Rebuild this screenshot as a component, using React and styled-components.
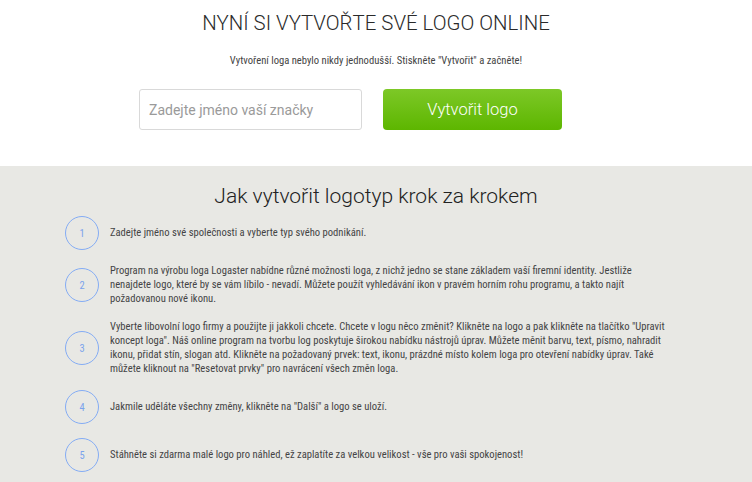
import React from 'react';
import styled, { createGlobalStyle } from 'styled-components';

const GlobalStyle = createGlobalStyle`
  html, body {
    margin: 0;
    padding: 0;
    background: #e8e8e4;
  }
  body {
    font-family: "Roboto", "Liberation Sans", sans-serif;
    color: #333;
  }
`;

const Page = styled.div`
  width: 752px;
  min-height: 482px;
  overflow: hidden;
`;

const Hero = styled.section`
  background: #ffffff;
  height: 166px;
  display: flex;
  flex-direction: column;
  align-items: center;
  box-sizing: border-box;
  padding-top: 9px;
`;

const Title = styled.h1`
  margin: 0;
  font-family: "Roboto", sans-serif;
  font-weight: 300;
  font-size: 20.4px;
  line-height: 28px;
  color: #2a2a2a;
`;

const Subtitle = styled.p`
  margin: 17px 0 0;
  font-family: "Roboto Condensed", "Liberation Sans Narrow", "Roboto", sans-serif;
  font-stretch: condensed;
  font-size: 10.6px;
  line-height: 14px;
  color: #444;
`;

const FormRow = styled.div`
  display: flex;
  gap: 21px;
  margin-top: 21px;
  margin-right: 51px;
`;

const NameInput = styled.input`
  width: 223px;
  height: 41px;
  box-sizing: border-box;
  border: 1px solid #d9d9d9;
  border-radius: 3px;
  padding: 0 9px;
  font-family: "Roboto", sans-serif;
  font-size: 14px;
  color: #333;
  outline: none;
  &::placeholder {
    color: #9a9a9a;
  }
`;

const CreateButton = styled.button`
  width: 179px;
  height: 41px;
  border: none;
  border-radius: 4px;
  background: linear-gradient(to bottom, #7dc827 0%, #5db600 100%);
  color: #ffffff;
  font-family: "Roboto", sans-serif;
  font-weight: 300;
  font-size: 16.5px;
  cursor: pointer;
`;

const Steps = styled.section`
  padding: 15px 0 0;
`;

const StepsTitle = styled.h2`
  margin: 0 0 5px;
  text-align: center;
  font-weight: 300;
  font-size: 21px;
  line-height: 30px;
  color: #222;
`;

const StepList = styled.ol`
  list-style: none;
  margin: 0;
  padding: 0 0 0 65px;
  display: flex;
  flex-direction: column;
  gap: 14px;
`;

const Step = styled.li`
  display: flex;
  align-items: center;
  gap: 11px;
  min-height: 34px;
`;

const Circle = styled.span`
  flex: 0 0 auto;
  width: 34px;
  height: 34px;
  box-sizing: border-box;
  border: 1.5px solid #84acf4;
  border-radius: 50%;
  display: flex;
  align-items: center;
  justify-content: center;
  font-family: "Roboto Condensed", "Roboto", sans-serif;
  font-stretch: condensed;
  font-size: 10.5px;
  font-weight: 400;
  color: #7aa3ec;
`;

const StepText = styled.p`
  margin: 0;
  font-family: "Roboto Condensed", "Liberation Sans Narrow", "Roboto", sans-serif;
  font-stretch: condensed;
  font-size: 10.6px;
  line-height: 14px;
  color: #444;
  white-space: nowrap;
`;

const steps = [
  ['Zadejte jméno své společnosti a vyberte typ svého podnikání.'],
  [
    'Program na výrobu loga Logaster nabídne různé možnosti loga, z nichž jedno se stane základem vaší firemní identity. Jestliže',
    'nenajdete logo, které by se vám líbilo - nevadí. Můžete použít vyhledávání ikon v pravém horním rohu programu, a takto najít',
    'požadovanou nové ikonu.',
  ],
  [
    'Vyberte libovolní logo firmy a použijte ji jakkoli chcete. Chcete v logu něco změnit? Klikněte na logo a pak klikněte na tlačítko "Upravit',
    'koncept loga". Náš online program na tvorbu log poskytuje širokou nabídku nástrojů úprav. Můžete měnit barvu, text, písmo, nahradit',
    'ikonu, přidat stín, slogan atd. Klikněte na požadovaný prvek: text, ikonu, prázdné místo kolem loga pro otevření nabídky úprav. Také',
    'můžete kliknout na "Resetovat prvky" pro navrácení všech změn loga.',
  ],
  ['Jakmile uděláte všechny změny, klikněte na "Další" a logo se uloží.'],
  ['Stáhněte si zdarma malé logo pro náhled, ež zaplatíte za velkou velikost - vše pro vaši spokojenost!'],
];

export default function App() {
  return (
    <Page>
      <GlobalStyle />
      <Hero>
        <Title>NYNÍ SI VYTVOŘTE SVÉ LOGO ONLINE</Title>
        <Subtitle>Vytvoření loga nebylo nikdy jednodušší. Stiskněte "Vytvořit" a začněte!</Subtitle>
        <FormRow>
          <NameInput placeholder="Zadejte jméno vaší značky" />
          <CreateButton>Vytvořit logo</CreateButton>
        </FormRow>
      </Hero>
      <Steps>
        <StepsTitle>Jak vytvořit logotyp krok za krokem</StepsTitle>
        <StepList>
          {steps.map((lines, i) => (
            <Step key={i}>
              <Circle>{i + 1}</Circle>
              <StepText>
                {lines.map((line, j) => (
                  <React.Fragment key={j}>
                    {j > 0 && <br />}
                    {line}
                  </React.Fragment>
                ))}
              </StepText>
            </Step>
          ))}
        </StepList>
      </Steps>
    </Page>
  );
}
